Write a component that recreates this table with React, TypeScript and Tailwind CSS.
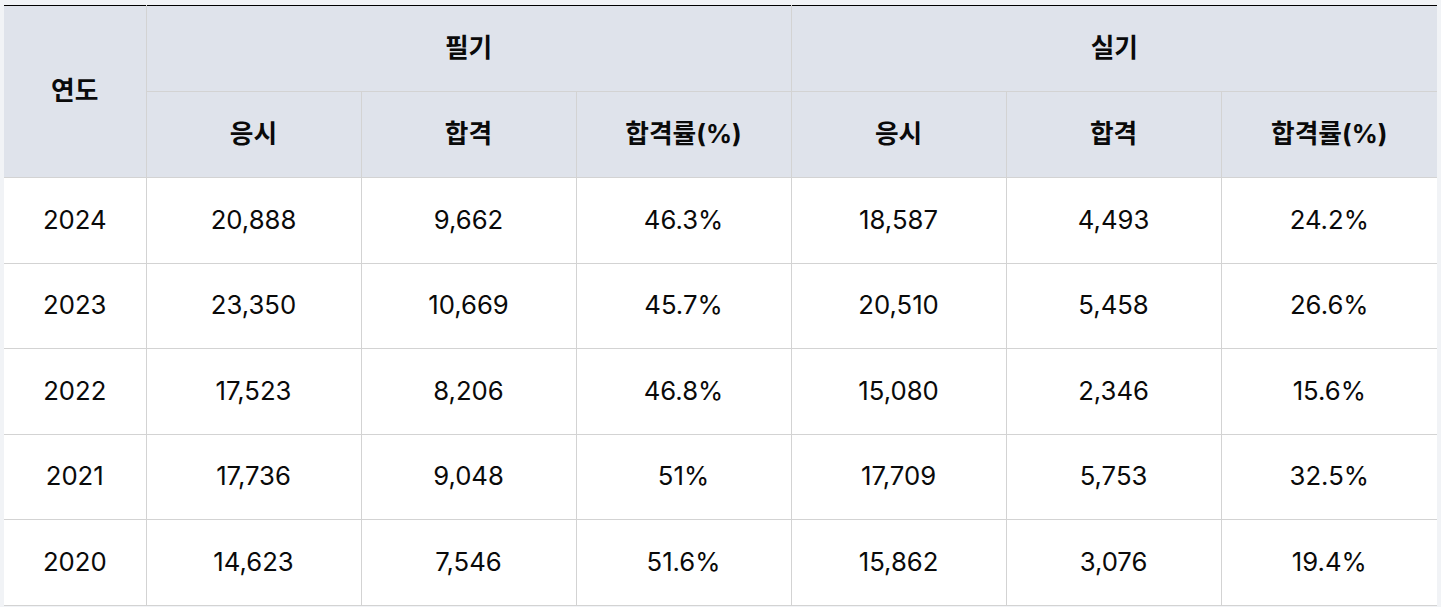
const rows = [
  { year: "2024", w: ["20,888", "9,662", "46.3%"], p: ["18,587", "4,493", "24.2%"] },
  { year: "2023", w: ["23,350", "10,669", "45.7%"], p: ["20,510", "5,458", "26.6%"] },
  { year: "2022", w: ["17,523", "8,206", "46.8%"], p: ["15,080", "2,346", "15.6%"] },
  { year: "2021", w: ["17,736", "9,048", "51%"], p: ["17,709", "5,753", "32.5%"] },
  { year: "2020", w: ["14,623", "7,546", "51.6%"], p: ["15,862", "3,076", "19.4%"] },
];

const subHeads = ["응시", "합격", "합격률(%)", "응시", "합격", "합격률(%)"];

export default function App() {
  return (
    <div
      className="min-h-[607px] bg-[#f1f3f6] pl-[4px] pr-[4px] pt-[5px] text-[#0a0a0a]"
      style={{ fontFamily: '"Inter", "Noto Sans CJK KR", sans-serif' }}
    >
      <table className="w-[1433px] table-fixed border-collapse border-t border-t-black text-[25.7px]">
        <colgroup>
          <col className="w-[142px]" />
          <col className="w-[215px]" />
          <col className="w-[215px]" />
          <col className="w-[215px]" />
          <col className="w-[215px]" />
          <col className="w-[215px]" />
          <col className="w-[216px]" />
        </colgroup>
        <thead className="bg-[#dfe3eb] font-bold">
          <tr className="h-[86px]">
            <th rowSpan={2} className="border-r border-b border-[#d3d3d3] text-center align-middle">
              연도
            </th>
            <th colSpan={3} className="border-r border-b border-[#d3d3d3] text-center align-middle">
              필기
            </th>
            <th colSpan={3} className="border-b border-[#d3d3d3] text-center align-middle">
              실기
            </th>
          </tr>
          <tr className="h-[86px]">
            {subHeads.map((h, i) => (
              <th
                key={i}
                className={`border-b border-[#d3d3d3] text-center align-middle ${
                  i < 5 ? "border-r" : ""
                }`}
              >
                {h}
              </th>
            ))}
          </tr>
        </thead>
        <tbody className="bg-white">
          {rows.map((r) => (
            <tr key={r.year} className="h-[85.5px]">
              <td className="border-r border-b border-[#d3d3d3] text-center align-middle">{r.year}</td>
              {[...r.w, ...r.p].map((v, i) => (
                <td
                  key={i}
                  className={`border-b border-[#d3d3d3] text-center align-middle ${
                    i < 5 ? "border-r" : ""
                  }`}
                >
                  {v}
                </td>
              ))}
            </tr>
          ))}
        </tbody>
      </table>
    </div>
  );
}
